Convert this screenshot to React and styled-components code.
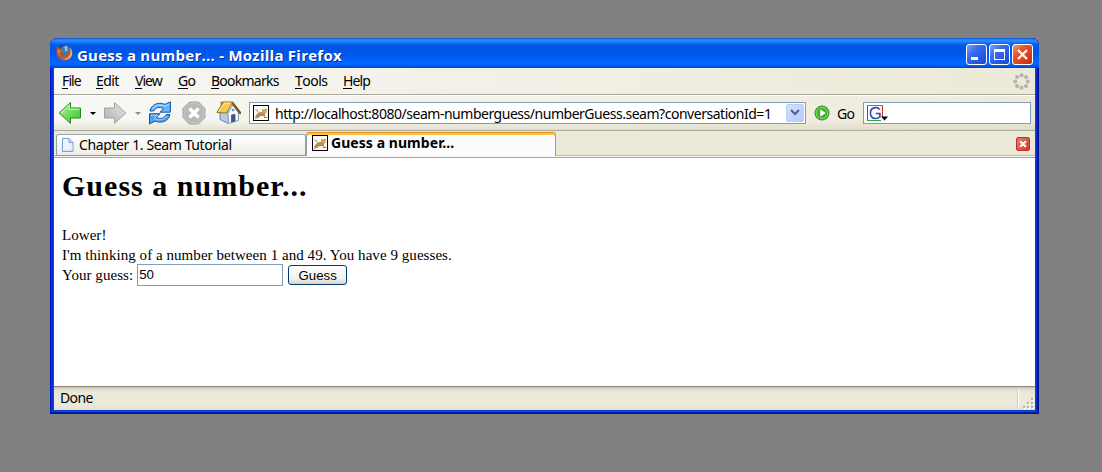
import React from 'react';
import styled, { createGlobalStyle } from 'styled-components';

const GlobalStyle = createGlobalStyle`
  * { box-sizing: border-box; }
  html, body { margin: 0; padding: 0; background: #808080; overflow: hidden; }
  svg { display: block; flex: none; }
`;

const uiFont = `'Noto Sans', 'Open Sans', sans-serif`;

const Desktop = styled.div`
  width: 1102px;
  height: 472px;
  padding: 38px 0 0 50px;
  background: #808080;
  font-family: ${uiFont};
  font-size: 14px;
  color: #000;
`;

const Window = styled.div`
  display: flex;
  flex-direction: column;
  width: 989px;
  height: 376px;
  padding: 0 4px 4px;
  border-radius: 8px 8px 0 0;
  background: #0842dc;
  box-shadow: inset 1px 0 #0019c8, inset -1px 0 #00138c, inset -2px 0 #001ea0, inset 0 -1px #00138c, inset 0 -2px #001ea0, inset 3px 0 #0831d9, inset -3px 0 #0831d9;
  overflow: hidden;
`;

const TitleBar = styled.header`
  display: flex;
  align-items: center;
  height: 30px;
  flex: none;
  margin: 0 -4px;
  padding: 3px 6px 0 6px;
  background: linear-gradient(#0a50d0 0, #2f8cff 2px, #2080fb 4px, #0660ec 6px, #0055e5 10px, #0057e8 17px, #0066fd 23px, #0066ff 26px, #005be8 28px, #0040c4 30px);

  > svg { margin-top: -5px; }
`;

const Title = styled.h1`
  flex: 1;
  margin: 0 0 0 4px;
  font: bold 15px/26px 'Open Sans', 'Noto Sans', sans-serif;
  letter-spacing: 0.25px;
  color: #fff;
  text-shadow: 1px 1px #0a2a90;
  white-space: pre;
`;

const Controls = styled.div`
  display: flex;
  gap: 2px;
`;

const ControlButton = styled.button`
  width: 21px;
  height: 21px;
  padding: 0;
  border: 1px solid #fff;
  border-radius: 3px;
  background: ${(p) => (p.$close
    ? 'linear-gradient(135deg, #f0a080, #e2542c 35%, #d84018 70%, #b83010)'
    : 'linear-gradient(135deg, #80a4f8, #3a6cee 35%, #2458e4 70%, #1c48c8)')};
`;

const Chrome = styled.div`
  display: flex;
  flex-direction: column;
  flex: none;
  background: linear-gradient(90deg, #f7f7f5 0, #f2f1e8 40%, #ece9d8 100%);
`;

const MenuBar = styled.nav`
  display: flex;
  align-items: center;
  height: 27px;
  padding: 0 5px 0 8px;
  border-bottom: 1px solid #aca899;
`;

const MenuItem = styled.span`
  width: ${(p) => p.$w}px;
  line-height: 20px;
  letter-spacing: ${(p) => p.$ls || 0}px;
  white-space: nowrap;
`;

const Key = styled.span`
  box-shadow: inset 0 -1px #000;
  display: inline-block;
  line-height: 17px;
`;

const Push = styled.div`
  margin-left: auto;
`;

const ToolBar = styled.div`
  display: flex;
  align-items: center;
  height: 36px;
  padding: 0 4px 1px 4px;
  border-top: 1px solid #fff;
  border-bottom: 1px solid #aca899;
  background: linear-gradient(rgba(255,255,255,0.1) 70%, rgba(200,195,165,0.35));
`;

const Caret = styled.span`
  width: 6px;
  height: 3px;
  flex: none;
  margin: 2px 7px 0 8px;
  border: 3px solid transparent;
  border-bottom: 0;
  border-top-color: ${(p) => p.$color};
`;

const IconSlot = styled.span`
  width: ${(p) => p.$w}px;
  flex: none;
`;

const Field = styled.div`
  display: flex;
  align-items: center;
  width: ${(p) => p.$w}px;
  height: 22px;
  flex: none;
  padding: 0 1px 0 3px;
  border: 1px solid #7f9db9;
  background: #fff;
`;

const Url = styled.span`
  flex: 1;
  min-width: 0;
  margin-left: 6px;
  padding-top: 2px;
  white-space: nowrap;
  line-height: 20px;
  letter-spacing: -0.475px;
`;

const DropButton = styled.button`
  display: flex;
  align-items: center;
  justify-content: center;
  width: 18px;
  height: 18px;
  flex: none;
  padding: 0;
  border: 1px solid #bccdf8;
  border-radius: 2px;
  background: linear-gradient(135deg, #d4e0fe, #b6c9fa);
`;

const GoSlot = styled(IconSlot)`
  padding-left: 8px;
`;

const GoLabel = styled.span`
  width: 26px;
  margin-left: 7px;
  padding-top: 2px;
  letter-spacing: -0.7px;
`;

const TabStrip = styled.div`
  display: flex;
  align-items: flex-start;
  height: 27px;
  padding: 1px 5px 0 2px;
  background: #ece9d8;
  box-shadow: inset 0 -1px #aca899, inset 0 -2px #f6f4ec, inset 0 -3px #c0bdac;
`;

const Tab = styled.div`
  display: flex;
  align-items: center;
  width: 250px;
  height: ${(p) => (p.$active ? 24 : 22)}px;
  margin-top: ${(p) => (p.$active ? 0 : 2)}px;
  padding: ${(p) => (p.$active ? '0 5px 3px' : '0 4px 1px')};
  gap: ${(p) => (p.$active ? 3 : 5)}px;
  border: 1px solid #91a0a8;
  border-top-color: ${(p) => (p.$active ? '#e5892c' : '#91a7b4')};
  border-bottom: ${(p) => (p.$active ? 0 : '1px solid #919b9c')};
  border-radius: 3px 3px 0 0;
  background: ${(p) => (p.$active ? '#fcfcfe' : 'linear-gradient(#fff, #f4f4ee 70%, #ecebe4)')};
  box-shadow: ${(p) => (p.$active ? 'inset 0 2px #ffc73c' : 'none')};
  font-weight: ${(p) => (p.$active ? 700 : 400)};
  letter-spacing: ${(p) => (p.$active ? 0.06 : -0.39)}px;
  line-height: 20px;
  white-space: nowrap;
`;

const TabClose = styled.button`
  width: 14px;
  height: 14px;
  margin: 5px 0 0 auto;
  padding: 0;
  border: 1px solid #b83428;
  border-radius: 2px;
  background: linear-gradient(135deg, #ea7a66, #d23c28);
`;

const Page = styled.main`
  flex: 1;
  padding: 0 8px;
  background: #fff;
  font-family: 'Liberation Serif', serif;
  font-size: 15px;
  line-height: 20px;
`;

const Heading = styled.h2`
  margin: 10px 0 21px;
  font-size: 30px;
  line-height: 36px;
  letter-spacing: 1.02px;
`;

const Line = styled.p`
  margin: 0;
  letter-spacing: 0.055px;
  white-space: nowrap;
`;

const GuessRow = styled.div`
  display: flex;
  align-items: center;
  height: 20px;
`;

const GuessInput = styled.input`
  width: 146px;
  height: 22px;
  margin: 0 5px 0 4px;
  padding: 0 1px 2px;
  border: 1px solid #7f9db9;
  border-radius: 0;
  background: #fff;
  outline: 0;
  font: 13.3px 'Liberation Sans', Arial, sans-serif;
  color: #000;
`;

const GuessButton = styled.button`
  width: 59px;
  height: 20px;
  padding: 0;
  border: 1px solid #003c74;
  border-radius: 3px;
  background: linear-gradient(#fff, #f3f2ed 70%, #d8d0c4);
  font: 13.3px 'Liberation Sans', Arial, sans-serif;
  color: #000;
`;

const StatusBar = styled.footer`
  display: flex;
  align-items: center;
  height: 24px;
  flex: none;
  padding: 0 0 0 6px;
  border-top: 1px solid #8c897c;
  background: linear-gradient(#c8c5b4, #e4e1d0 3px, #ece9d8 6px, #ece9d8 18px, #e4e1d0);
`;

const StatusText = styled.span`
  flex: 1;
  padding-bottom: 2px;
  letter-spacing: -0.6px;
`;

const Divider = styled.span`
  width: 2px;
  height: 20px;
  margin-right: 4px;
  border-left: 1px solid #d0cdbc;
  background: #fff;
`;

const Grip = styled.span`
  align-self: flex-end;
`;

const FirefoxIcon = () => (
  <svg width="17" height="17" viewBox="0 0 16 16">
    <circle cx="8" cy="8" r="7.2" fill="#1c3468" />
    <circle cx="9" cy="6" r="4.8" fill="#3f7cb4" />
    <path d="M8 2l3 .8-1.200 1.500 1.500 1.300-2.300 1.400z" fill="#a4d0e8" />
    <path d="M1 2.200L2.300 3.700 4 2.900l-.1 1.600L6.800 6 5 7.300c0 2.200 1.500 3.200 3.500 3 2.800-.3 4.200-2.200 3.400-5.700C16 7 16.600 11 13.400 13.800 9.800 16.700 4.100 16 1.600 12-.1 9.200 0 5 1 2.200z" fill="#b8552c" />
    <path d="M13.300 3c2.600 2.800 2.800 7.600-.3 10.200-2.500 2.100-5.400 1.800-7 .8 4.600.3 8.800-3 7.300-11z" fill="#e6b070" />
    <path d="M2 5l1.600.6L5 6.400 3.300 7.600c-.2 2 .8 3.600 2 4.600C2.700 11 1.300 8 2 5z" fill="#dc8448" />
  </svg>
);

const ThrobberIcon = () => (
  <svg width="17" height="17" viewBox="0 0 17 17" fill="#b4b3ae">
    {[[8.5, 2.2], [13, 4], [14.8, 8.5], [13, 13], [8.5, 14.8], [4, 13], [2.2, 8.5], [4, 4]].map(([x, y]) => (
      <circle key={`${x}-${y}`} cx={x} cy={y} r="2" />
    ))}
  </svg>
);

const ArrowIcon = ({ forward }) => (
  <svg width="24" height="24" viewBox="0 0 24 24">
    <defs>
      <linearGradient id={forward ? 'fwd' : 'back'} x1="0" y1="0" x2="1" y2="1">
        <stop offset="0" stopColor={forward ? '#e4e4e2' : '#b4f4a0'} />
        <stop offset="1" stopColor={forward ? '#b0b0ae' : '#38c020'} />
      </linearGradient>
    </defs>
    <path
      d="M1.200 12L12.500 1.500V7H22.500v10H12.500v5.500z"
      transform={forward ? 'matrix(-1 0 0 1 24 0)' : undefined}
      fill={`url(#${forward ? 'fwd' : 'back'})`}
      stroke={forward ? '#a0a09e' : '#1e8c1c'}
      strokeLinejoin="round"
    />
    {!forward && <path d="M3 12l8.300-7.700V8.200h10" fill="none" stroke="#d4fac8" />}
  </svg>
);

const ReloadIcon = () => (
  <svg width="24" height="24" viewBox="0 0 24 24" stroke="#1658ac" strokeWidth="1" strokeLinejoin="round">
    <path d="M2 10C3 4 10 .2 17 3.400L22.400.8v10.400H12l3.500-3.800C11.500 5.500 7 6.500 5.800 10z" fill="#68b4f4" />
    <path d="M22 13.500c-1 6-8 9.500-15 6.600L1.500 23V12.700H12l-3.700 3.900c4 1.800 8.700.7 9.900-3.100z" fill="#4ca0ee" />
    <path d="M4.500 8.200C7 4 12 3 17 5.100l4-2" fill="none" stroke="#b8e2fc" />
    <path d="M3 14.200h6.500L6.400 17.700C10 19.500 16 19.500 19 15" fill="none" stroke="#a8d8fa" />
  </svg>
);

const StopIcon = () => (
  <svg width="24" height="24" viewBox="0 0 24 24">
    <path d="M7.500 1h9L23 7.500v9L16.500 23h-9L1 16.500v-9z" fill="#b8b8b6" stroke="#a0a09e" />
    <path d="M8 2.200h8L21.800 8v8L16 21.800H8L2.200 16V8z" fill="none" stroke="#cacac8" />
    <path d="M7.500 7.500l9 9m0-9l-9 9" stroke="#fff" strokeWidth="3.600" />
  </svg>
);

const HomeIcon = () => (
  <svg width="25" height="25" viewBox="0 0 25 25" strokeLinejoin="round">
    <path d="M4 12v7.500l8.500 4V12z" fill="#b8cae6" stroke="#6c84ac" />
    <path d="M12 13L17 5l5.500 8v7.500L12.500 23.500z" fill="#f8f9fc" stroke="#8898b4" />
    <path d="M5 5.500V2h2.500v3" fill="#c8a088" stroke="#8c6040" strokeWidth=".8" />
    <path d="M16.500 3l7.700 10" stroke="#7c5a1c" strokeWidth="2.400" strokeLinecap="round" />
    <path d="M.8 12.500L7.500 2h9.300L10.500 13z" fill="#f4ca54" stroke="#9a7020" />
    <path d="M3 11.500L8.300 3.200h6" fill="none" stroke="#fde9a4" />
    <circle cx="17" cy="10" r="1.300" fill="#3c9ce0" />
    <path d="M15.500 22v-7l3.500-.6v6.600z" fill="#40587c" stroke="#2c4468" strokeWidth=".7" />
  </svg>
);

const SeamIcon = () => (
  <svg width="16" height="16" viewBox="0 0 16 16">
    <rect x="1" y="1" width="14" height="14" fill="#fbf8f2" />
    <path d="M2.500 4.500l3 2.500M2 13.500l4-1.500M11 12.500h3.500" fill="none" stroke="#8a8480" />
    <path d="M9 4l1.500.8L13.700 3.500l-.2 4-1.700 1.500.7 3.500-2-1.500-3 .3-3.500 1.500L2 12l1.500-2.500L5.500 7.500 9 7z" fill="#b08e5c" />
    <path d="M9.600 5l2 .8 1.600-1-.2 2.500-1.800 1-1.700-1z" fill="#e0ae50" />
    <rect x=".5" y=".5" width="15" height="15" fill="none" stroke="#000" />
  </svg>
);

const PageIcon = () => (
  <svg width="13" height="14" viewBox="0 0 13 14">
    <path d="M1.500.5h6.500l4 4v9H1.500z" fill="#edf4ff" stroke="#7c9cd8" />
    <path d="M8 .5v4h4" fill="#c4d8f8" stroke="#7c9cd8" />
    <path d="M3 12h8V7" fill="none" stroke="#cbdcf8" />
  </svg>
);

const GoIcon = () => (
  <svg width="16" height="16" viewBox="0 0 16 16">
    <circle cx="8" cy="8" r="7" fill="#45b830" stroke="#228c1c" />
    <circle cx="8" cy="8" r="5.800" fill="none" stroke="#85db6d" />
    <path d="M5.800 3.500v9L12.500 8z" fill="#fff" stroke="#1f8818" strokeWidth=".7" />
  </svg>
);

const SearchEngineIcon = () => (
  <svg width="21" height="16" viewBox="0 0 21 16">
    <path d="M.5 16V.5" stroke="#2a58d0" />
    <path d="M0 .5h15M0 15.500h14" stroke="#28a838" />
    <path d="M15.500 0v12" stroke="#e02820" />
    <path d="M12.700 4.600C11.500 2.900 9.900 2.300 8 2.600 4.900 3 3.300 5.300 3.400 8.300c.1 3.300 2.200 5.300 5.200 5.200 1.900 0 3.300-.7 4.300-1.800V8.500H8.800" fill="none" stroke="#2848b8" strokeWidth="1.600" />
    <path d="M14 11.500h7l-3.500 4z" fill="#000" />
  </svg>
);

const Cross = ({ size, width }) => (
  <svg width={size} height={size} viewBox="0 0 19 19">
    <path d="M5 5l9 9m0-9l-9 9" stroke="#fff" strokeWidth={width} />
  </svg>
);

const GripIcon = () => (
  <svg width="12" height="12" viewBox="0 0 12 12">
    {[[8, 0], [4, 4], [8, 4], [0, 8], [4, 8], [8, 8]].map(([x, y]) => (
      <g key={`${x}-${y}`}>
        <rect x={x + 1} y={y + 1} width="2" height="2" fill="#fff" />
        <rect x={x} y={y} width="2" height="2" fill="#b8b4a2" />
      </g>
    ))}
  </svg>
);

const menus = [
  ['File', 34, -0.9], ['Edit', 39, -0.6], ['View', 43, -1], ['Go', 33, -0.7],
  ['Bookmarks', 84, -0.75], ['Tools', 48, -0.5], ['Help', 40, -0.9],
];

export default function App() {
  return (
    <Desktop>
      <GlobalStyle />
      <Window>
        <TitleBar>
          <FirefoxIcon />
          <Title>Guess a number... - Mozilla Firefox</Title>
          <Controls>
            <ControlButton>
              <svg width="19" height="19"><path d="M4 12h7v3H4z" fill="#fff" /></svg>
            </ControlButton>
            <ControlButton>
              <svg width="19" height="19"><path d="M4 4h11v11H4zM5 7v7h9V7z" fill="#fff" fillRule="evenodd" /></svg>
            </ControlButton>
            <ControlButton $close><Cross size={19} width={2.2} /></ControlButton>
          </Controls>
        </TitleBar>
        <Chrome>
          <MenuBar>
            {menus.map(([name, w, ls]) => (
              <MenuItem key={name} $w={w} $ls={ls}><Key>{name[0]}</Key>{name.slice(1)}</MenuItem>
            ))}
            <Push><ThrobberIcon /></Push>
          </MenuBar>
          <ToolBar>
            <IconSlot $w={24}><ArrowIcon /></IconSlot>
            <Caret $color="#000" />
            <IconSlot $w={24}><ArrowIcon forward /></IconSlot>
            <Caret $color="#8c8c88" />
            <IconSlot $w={34}><ReloadIcon /></IconSlot>
            <IconSlot $w={34}><StopIcon /></IconSlot>
            <IconSlot $w={33}><HomeIcon /></IconSlot>
            <Field $w={557}>
              <SeamIcon />
              <Url>http://localhost:8080/seam-numberguess/numberGuess.seam?conversationId=1</Url>
              <DropButton>
                <svg width="10" height="7"><path d="M1 1l4 4 4-4" fill="none" stroke="#4d6185" strokeWidth="2" /></svg>
              </DropButton>
            </Field>
            <GoSlot $w={24}><GoIcon /></GoSlot>
            <GoLabel>Go</GoLabel>
            <Field $w={168}><SearchEngineIcon /></Field>
          </ToolBar>
          <TabStrip>
            <Tab><PageIcon />Chapter 1. Seam Tutorial</Tab>
            <Tab $active><SeamIcon />Guess a number...</Tab>
            <TabClose><Cross size={12} width={3.4} /></TabClose>
          </TabStrip>
        </Chrome>
        <Page>
          <Heading>Guess a number...</Heading>
          <Line>Lower!</Line>
          <Line>I'm thinking of a number between 1 and 49. You have 9 guesses.</Line>
          <GuessRow>
            <Line as="label" htmlFor="guess">Your guess:</Line>
            <GuessInput id="guess" defaultValue="50" />
            <GuessButton>Guess</GuessButton>
          </GuessRow>
        </Page>
        <StatusBar>
          <StatusText>Done</StatusText>
          <Divider />
          <Grip><GripIcon /></Grip>
        </StatusBar>
      </Window>
    </Desktop>
  );
}
